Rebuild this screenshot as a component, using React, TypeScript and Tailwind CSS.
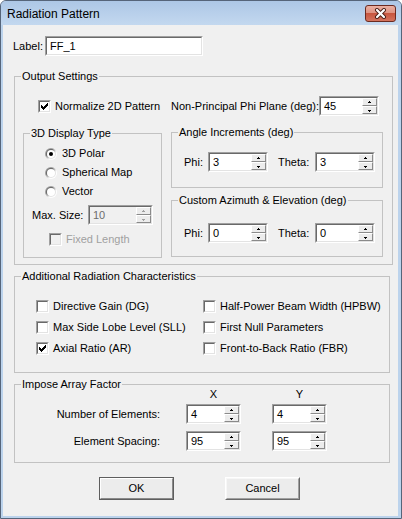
import React from 'react';

function CheckMark({ color = '#000' }: { color?: string }) {
  // classic 7x7 pixel check
  const px: [number, number, number][] = [
    [6, 0, 1], [5, 1, 2], [0, 2, 1], [4, 2, 3], [0, 3, 2], [3, 3, 3], [0, 4, 5], [1, 5, 3], [2, 6, 1],
  ];
  return (
    <svg width="7" height="7" viewBox="0 0 7 7" shapeRendering="crispEdges">
      {px.map(([x, y, w], i) => (
        <rect key={i} x={x} y={y} width={w} height={1} fill={color} />
      ))}
    </svg>
  );
}

function Check({ checked, disabled, label }: { checked?: boolean; disabled?: boolean; label: string }) {
  return (
    <div className="flex items-center h-[15px]">
      <div className="w-[13px] h-[13px] shrink-0 border border-t-[#a0a0a0] border-l-[#a0a0a0] border-b-white border-r-white">
        <div
          className={`w-full h-full flex items-center justify-center border border-t-[#696969] border-l-[#696969] border-b-[#e3e3e3] border-r-[#e3e3e3] ${
            disabled ? 'bg-[#f0f0f0]' : 'bg-white'
          }`}
        >
          {checked && <CheckMark />}
        </div>
      </div>
      <span className={`ml-[4px] whitespace-nowrap ${disabled ? 'text-[#a0a0a0]' : ''}`}>{label}</span>
    </div>
  );
}

function Radio({ checked, label, id }: { checked?: boolean; label: string; id: string }) {
  return (
    <div className="flex items-center h-[19px]">
      <svg width="12" height="12" viewBox="0 0 12 12" className="shrink-0">
        <defs>
          <linearGradient id={`o${id}`} x1="0" y1="0" x2="1" y2="1">
            <stop offset="0.35" stopColor="#a0a0a0" />
            <stop offset="0.65" stopColor="#ffffff" />
          </linearGradient>
          <linearGradient id={`i${id}`} x1="0" y1="0" x2="1" y2="1">
            <stop offset="0.35" stopColor="#696969" />
            <stop offset="0.65" stopColor="#e3e3e3" />
          </linearGradient>
        </defs>
        <circle cx="6" cy="6" r="6" fill={`url(#o${id})`} />
        <circle cx="6" cy="6" r="5" fill={`url(#i${id})`} />
        <circle cx="6" cy="6" r="4" fill="#fff" />
        {checked && <circle cx="6" cy="6" r="2" fill="#000" />}
      </svg>
      <span className="ml-[5px] whitespace-nowrap">{label}</span>
    </div>
  );
}

function Arrow({ up, color }: { up?: boolean; color: string }) {
  return (
    <svg width="5" height="3" viewBox="0 0 5 3" shapeRendering="crispEdges">
      {up ? (
        <>
          <rect x="2" y="0" width="1" height="1" fill={color} />
          <rect x="1" y="1" width="3" height="1" fill={color} />
        </>
      ) : (
        <>
          <rect x="1" y="1" width="3" height="1" fill={color} />
          <rect x="2" y="2" width="1" height="1" fill={color} />
        </>
      )}
    </svg>
  );
}

function SpinBtn({ up, disabled }: { up?: boolean; disabled?: boolean }) {
  return (
    <div className="flex-1 border border-t-white border-l-white border-b-[#8a8a8a] border-r-[#8a8a8a] bg-[#ececec] flex items-center justify-center">
      <Arrow up={up} color={disabled ? '#a0a0a0' : '#000'} />
    </div>
  );
}

function Sunken({ w, children, disabled }: { w: string; children: React.ReactNode; disabled?: boolean }) {
  return (
    <div className={`${w} h-[20px] shrink-0 border border-t-[#a0a0a0] border-l-[#a0a0a0] border-b-white border-r-white`}>
      <div
        className={`h-full flex border border-t-[#696969] border-l-[#696969] border-b-[#e3e3e3] border-r-[#e3e3e3] ${
          disabled ? 'bg-[#f0f0f0] text-[#6d6d6d]' : 'bg-white'
        }`}
      >
        {children}
      </div>
    </div>
  );
}

function Spin({ value, w, disabled }: { value: string; w: string; disabled?: boolean }) {
  return (
    <Sunken w={w} disabled={disabled}>
      <span className="flex-1 pl-[3px] leading-[16px]">{value}</span>
      <div className="w-[15px] flex flex-col py-[0px]">
        <SpinBtn up disabled={disabled} />
        <SpinBtn disabled={disabled} />
      </div>
    </Sunken>
  );
}

function Group({ title, className, children }: { title: string; className: string; children?: React.ReactNode }) {
  return (
    <fieldset className={`border border-[#c2c2c2] px-[6px] ${className}`}>
      <legend className="px-[1px] leading-[13px]">{title}</legend>
      {children}
    </fieldset>
  );
}

function PhiTheta({ phi, theta, top }: { phi: string; theta: string; top: string }) {
  return (
    <div className={`${top} flex items-center`}>
      <span className="ml-[6px] w-[24px]">Phi:</span>
      <Spin value={phi} w="w-[60px]" />
      <span className="ml-[10px] w-[37px]">Theta:</span>
      <Spin value={theta} w="w-[60px]" />
    </div>
  );
}

function Button({ label, isDefault }: { label: string; isDefault?: boolean }) {
  if (isDefault) {
    return (
      <div className="w-[75px] h-[23px] border border-[#5e5e5e]">
        <div className="h-full flex items-center justify-center border border-t-white border-l-white border-b-[#8a8a8a] border-r-[#8a8a8a] bg-[#ececec]">
          {label}
        </div>
      </div>
    );
  }
  return (
    <div className="w-[75px] h-[23px] border border-t-white border-l-white border-b-[#696969] border-r-[#696969]">
      <div className="h-full flex items-center justify-center border border-t-[#f7f7f7] border-l-[#f7f7f7] border-b-[#a0a0a0] border-r-[#a0a0a0] bg-[#ececec]">
        {label}
      </div>
    </div>
  );
}

export default function App() {
  return (
    <div className="w-[402px] h-[519px] flex flex-col overflow-hidden rounded-t-[6px] border border-[#56657a] bg-[#bcd3ec] text-[11px] leading-[13px] text-black font-['Liberation_Sans',Arial,sans-serif]">
      {/* Title bar */}
      <div className="h-[24px] shrink-0 flex items-center pl-[6px] bg-[linear-gradient(#adc7e6,#c3d8ef)]">
        <span className="text-[12px] leading-[14px] pt-[1px]">Radiation Pattern</span>
        <div className="ml-auto mr-[5px] w-[31px] h-[17px] rounded-[3px] border border-[#6b2a20] bg-[linear-gradient(#eab0a2,#de907f_50%,#c8563f_50%,#d4735e)] flex items-center justify-center">
          <svg width="13" height="11" viewBox="0 0 13 11">
            <path d="M3 2 L10 9 M10 2 L3 9" stroke="#4a1f17" strokeWidth="4" strokeLinecap="round" />
            <path d="M3 2 L10 9 M10 2 L3 9" stroke="#fff" strokeWidth="2.2" strokeLinecap="round" />
          </svg>
        </div>
      </div>

      {/* Client area */}
      <div className="flex-1 ml-[2px] mr-[3px] mb-[2px] bg-[#f0f0f0] flex flex-col">
        <div className="mt-[11px] ml-[10px] flex items-center">
          <span className="w-[32px]">Label:</span>
          <Sunken w="w-[158px]">
            <span className="pl-[3px] leading-[16px]">FF_1</span>
          </Sunken>
        </div>

        <Group title="Output Settings" className="ml-[11px] mt-[14px] w-[376px] h-[195px]">
          <div className="mt-[13px] flex items-center h-[20px]">
            <div className="w-[150px] pl-[17px]">
              <Check checked label="Normalize 2D Pattern" />
            </div>
            <div className="flex-1 flex items-center">
              <span className="whitespace-nowrap">Non-Principal Phi Plane (deg):</span>
              <div className="ml-auto mr-[7px]">
                <Spin value="45" w="w-[60px]" />
              </div>
            </div>
          </div>

          <div className="mt-[10px] flex">
            <Group title="3D Display Type" className="ml-[2px] mt-[1px] w-[139px] h-[131px]">
              <div className="mt-[4px] pl-[15px]">
                <Radio id="a" checked label="3D Polar" />
                <Radio id="b" label="Spherical Map" />
                <Radio id="c" label="Vector" />
              </div>
              <div className="mt-[4px] pl-[2px] flex items-center">
                <span className="w-[56px]">Max. Size:</span>
                <Spin value="10" w="w-[65px]" disabled />
              </div>
              <div className="mt-[7px] pl-[19px]">
                <Check disabled label="Fixed Length" />
              </div>
            </Group>

            <div className="ml-[9px] w-[212px] flex flex-col">
              <Group title="Angle Increments (deg)" className="w-[212px] h-[62px]">
                <PhiTheta phi="3" theta="3" top="mt-[13px]" />
              </Group>
              <Group title="Custom Azimuth & Elevation (deg)" className="mt-[6px] w-[212px] h-[63px]">
                <PhiTheta phi="0" theta="0" top="mt-[16px]" />
              </Group>
            </div>
          </div>
        </Group>

        <Group title="Additional Radiation Characteristics" className="ml-[11px] mt-[5px] w-[376px] h-[103px]">
          <div className="mt-[13px] grid grid-cols-[182px_1fr]">
            {[
              ['Directive Gain (DG)', false, 'Half-Power Beam Width (HPBW)', false],
              ['Max Side Lobe Level (SLL)', false, 'First Null Parameters', false],
              ['Axial Ratio (AR)', true, 'Front-to-Back Ratio (FBR)', false],
            ].map(([a, ac, b, bc]) => (
              <React.Fragment key={a as string}>
                <div className="h-[21px] flex items-center pl-[15px]">
                  <Check checked={ac as boolean} label={a as string} />
                </div>
                <div className="h-[21px] flex items-center">
                  <Check checked={bc as boolean} label={b as string} />
                </div>
              </React.Fragment>
            ))}
          </div>
        </Group>

        <Group title="Impose Array Factor" className="ml-[11px] mt-[5px] w-[376px] h-[85px]">
          <div className="-mt-[3px] h-[13px] flex">
            <span className="w-[139px]" />
            <span className="ml-[26px] w-[55px] text-center">X</span>
            <span className="ml-[31px] w-[55px] text-center">Y</span>
          </div>
          <div className="mt-[3px] flex items-center">
            <span className="w-[139px] text-right">Number of Elements:</span>
            <div className="ml-[26px]">
              <Spin value="4" w="w-[55px]" />
            </div>
            <div className="ml-[31px]">
              <Spin value="4" w="w-[55px]" />
            </div>
          </div>
          <div className="mt-[7px] flex items-center">
            <span className="w-[139px] text-right">Element Spacing:</span>
            <div className="ml-[26px]">
              <Spin value="95" w="w-[55px]" />
            </div>
            <div className="ml-[31px]">
              <Spin value="95" w="w-[55px]" />
            </div>
          </div>
        </Group>

        <div className="mt-[14px] pr-[2px] flex justify-center gap-[51px]">
          <Button label="OK" isDefault />
          <Button label="Cancel" />
        </div>
      </div>
    </div>
  );
}
